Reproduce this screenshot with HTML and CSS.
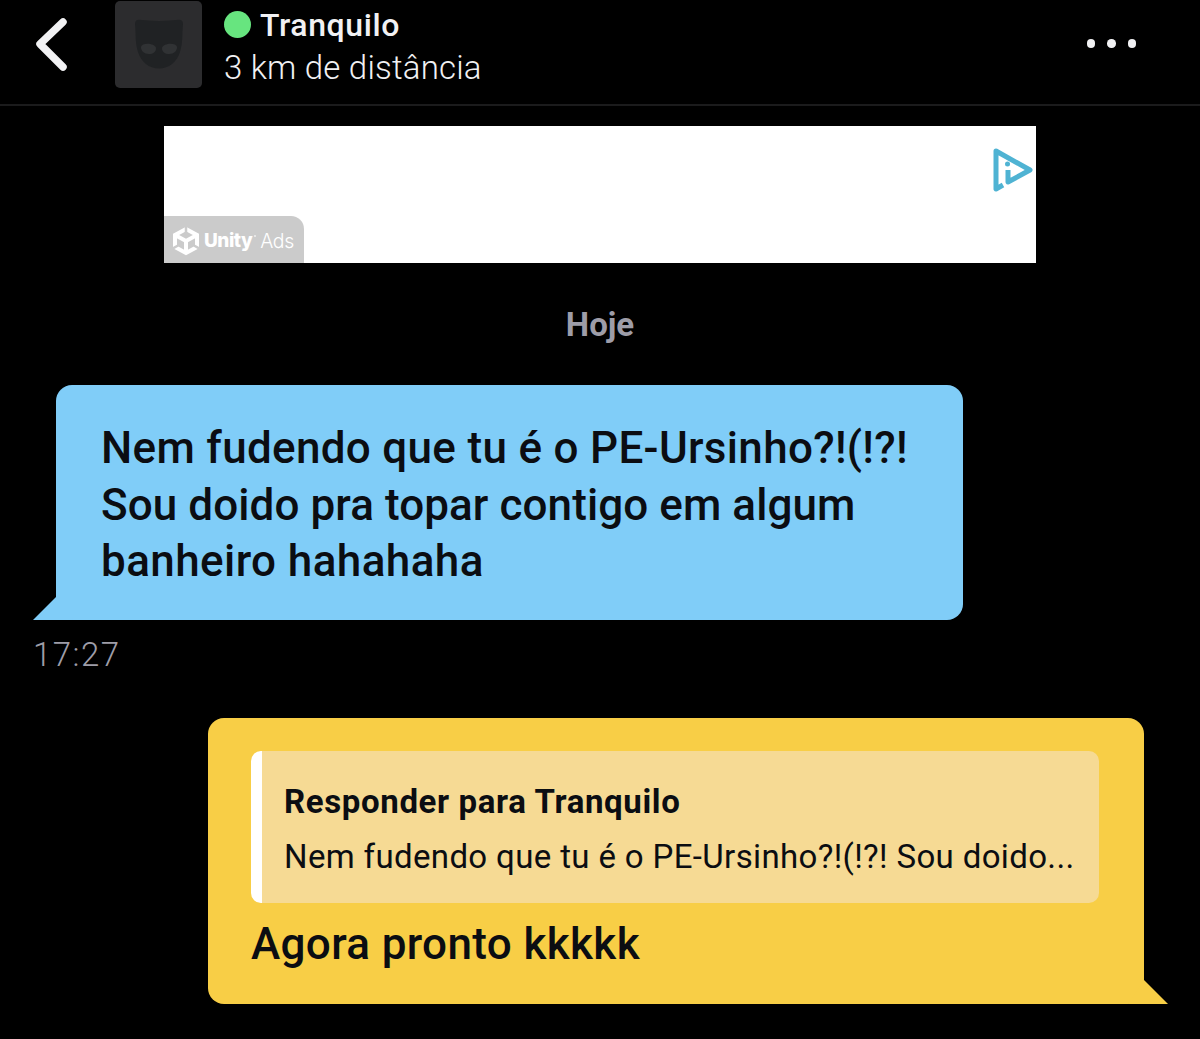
FILE: index.html
```html
<!DOCTYPE html>
<html lang="pt-BR">
<head>
    <meta charset="UTF-8">
    <meta name="viewport" content="width=device-width, initial-scale=1.0">
    <title>Tranquilo</title>
    <link rel="stylesheet" href="styles.css">
</head>
<body>
    <header class="topbar">
        <svg class="back" viewBox="0 0 36 56" width="36" height="56">
            <path d="M30 6 L7 28 L30 51" />
        </svg>
        <div class="avatar">
            <svg viewBox="0 0 48 50" width="48" height="50">
                <path class="mask" d="M4 .8 Q24 3 44 .8 Q48 .8 48 5 C47 15 48 24 45 33 C42 43 34 49.500 24 49.500 C14 49.500 6 43 3 33 C0 24 1 15 0 5 Q0 .8 4 .8 Z" />
                <path class="eye" d="M6 28 C7 23 20 24 21 29 C21 33 18 35 14 35 C9 35 6 32 6 28 Z" />
                <path class="eye" d="M42 28 C41 23 28 24 27 29 C27 33 30 35 34 35 C39 35 42 32 42 28 Z" />
            </svg>
        </div>
        <div class="user">
            <div class="user-name"><span class="online"></span><span class="name">Tranquilo</span></div>
            <div class="distance">3 km de distância</div>
        </div>
        <div class="more"><span></span><span></span><span></span></div>
    </header>

    <main class="chat">
        <div class="ad">
            <div class="unity">
                <svg viewBox="0 0 28 30" width="28" height="30">
                    <path class="cube" d="M14 3 L25 9 V21 L14 27 L3 21 V9 Z" />
                    <path class="cube" d="M3 9 L14 15 L25 9 M14 15 V27" />
                    <path class="cut" d="M14 0 V7 M0 23 L6 19.500 M28 23 L22 19.500" />
                </svg>
                <span class="unity-name">Unity</span><span class="unity-dot"></span><span class="unity-ads">Ads</span>
            </div>
            <svg class="adchoices" viewBox="0 0 42 44" width="42" height="44">
                <path d="M11 37 L4 41 V3 L38 22 L16 34 V22" />
                <circle cx="15.500" cy="16" r="2.500" />
            </svg>
        </div>

        <div class="day">Hoje</div>

        <div class="bubble received">
            <span class="line l1">Nem fudendo que tu é o PE-Ursinho?!(!?!</span>
            <span class="line l2">Sou doido pra topar contigo em algum</span>
            <span class="line l3">banheiro hahahaha</span>
        </div>
        <div class="time">17:27</div>

        <div class="bubble sent">
            <div class="quote">
                <div class="quote-title">Responder para Tranquilo</div>
                <div class="quote-text">Nem fudendo que tu é o PE-Ursinho?!(!?! Sou doido...</div>
            </div>
            <span class="line reply">Agora pronto kkkkk</span>
        </div>
    </main>
</body>
</html>
```
FILE: styles.css
```css
* {
  box-sizing: border-box;
}

body {
  margin: 0;
  height: 1039px;
  overflow: hidden;
  background: #000;
  color: #f1f1f3;
  font-family: Roboto, "Noto Sans", sans-serif;
  white-space: nowrap;
}

.topbar {
  display: flex;
  height: 106px;
  padding: 1px 64px 0 33px;
  border-bottom: 2px solid #1b1b1c;
}

.back {
  margin-top: 15px;
  fill: none;
  stroke: #f1f1f3;
  stroke-width: 7.500;
  stroke-linecap: round;
  stroke-linejoin: round;
}

.avatar {
  display: flex;
  justify-content: center;
  width: 87px;
  height: 87px;
  margin-left: 46px;
  padding-top: 18px;
  border-radius: 5px;
  background: #2c2c2e;
}

.mask {
  fill: #202224;
}

.eye {
  fill: #303234;
}

.user {
  margin-left: 22px;
}

.user-name {
  display: flex;
  align-items: center;
  height: 46px;
}

.online {
  width: 27px;
  height: 27px;
  margin-right: 9px;
  border-radius: 50%;
  background: #67e57f;
}

.name {
  margin-top: 1px;
  font-size: 32px;
  font-weight: 500;
  letter-spacing: 0.6px;
}

.distance {
  padding-top: 1px;
  font-size: 33px;
  font-weight: 300;
  line-height: 40px;
  letter-spacing: 0.2px;
}

.more {
  display: flex;
  gap: 12px;
  margin: 38px 0 0 auto;
}

.more span {
  width: 8.500px;
  height: 8.500px;
  border-radius: 50%;
  background: #f1f1f3;
}

.chat {
  padding: 20px 33px 0;
}

.ad {
  display: flex;
  justify-content: space-between;
  width: 872px;
  height: 137px;
  margin: 0 auto;
  background: #fff;
}

.unity {
  display: flex;
  align-items: center;
  align-self: flex-end;
  width: 140px;
  height: 47px;
  padding: 2px 0 0 8px;
  border-radius: 0 13px 0 0;
  background: #cbcbcb;
  color: #fff;
  font-family: Inter, sans-serif;
  font-size: 19px;
}

.cube {
  fill: none;
  stroke: #fff;
  stroke-width: 4;
}

.cut {
  fill: none;
  stroke: #cbcbcb;
  stroke-width: 2.500;
}

.unity-name {
  margin-left: 4px;
  font-weight: 800;
  letter-spacing: -0.5px;
}

.unity-dot {
  width: 2px;
  height: 2px;
  margin: -10px 4px 0 2px;
  background: #e6e6e6;
}

.unity-ads {
  font-size: 19.500px;
  font-weight: 300;
  letter-spacing: -0.4px;
}

.adchoices {
  margin-top: 22px;
  margin-right: 2px;
  fill: none;
  stroke: #4fb3d3;
  stroke-width: 5;
  stroke-linejoin: round;
}

.adchoices circle {
  fill: #4fb3d3;
  stroke: none;
}

.day {
  margin-top: 42px;
  color: #9e9da8;
  font-size: 33px;
  font-weight: 700;
  line-height: 40px;
  text-align: center;
}

.bubble {
  position: relative;
  border-radius: 16px;
  color: #0b0d12;
  font-size: 44px;
  font-weight: 500;
  line-height: 56.500px;
}

/* speech tail in the bottom corner */
.bubble::after {
  content: "";
  position: absolute;
  bottom: 0;
  width: 40px;
  height: 40px;
  background: inherit;
}

.line {
  display: block;
}

.l1 {
  letter-spacing: 0.31px;
}

.l2 {
  letter-spacing: 0.08px;
}

.l3 {
  letter-spacing: 0.42px;
}

.received {
  width: 907px;
  height: 235px;
  margin: 40px 0 0 23px;
  padding: 35px 45px;
  background: #80cdf8;
}

.received::after {
  left: -23px;
  clip-path: polygon(0 100%, 23px 17px, 100% 100%);
}

.time {
  margin-top: 15px;
  color: #9e9da8;
  font-size: 33px;
  font-weight: 300;
  line-height: 40px;
  letter-spacing: 1.5px;
}

.sent {
  width: 936px;
  height: 286px;
  margin: 43px 0 0 175px;
  padding: 33px 45px 0 43px;
  background: #f8ce46;
}

.sent::after {
  right: -24px;
  clip-path: polygon(0 100%, 16px 16px, 100% 100%);
}

.quote {
  height: 152px;
  padding: 24px 0 0 22px;
  border-left: 11px solid #fff;
  border-radius: 10px;
  background: #f6da94;
  font-size: 33px;
  line-height: 54.500px;
}

.quote-title {
  font-weight: 700;
  letter-spacing: 0.63px;
}

.quote-text {
  font-weight: 400;
  letter-spacing: 0.36px;
}

.reply {
  margin-top: 13px;
  letter-spacing: 0.36px;
}
```
